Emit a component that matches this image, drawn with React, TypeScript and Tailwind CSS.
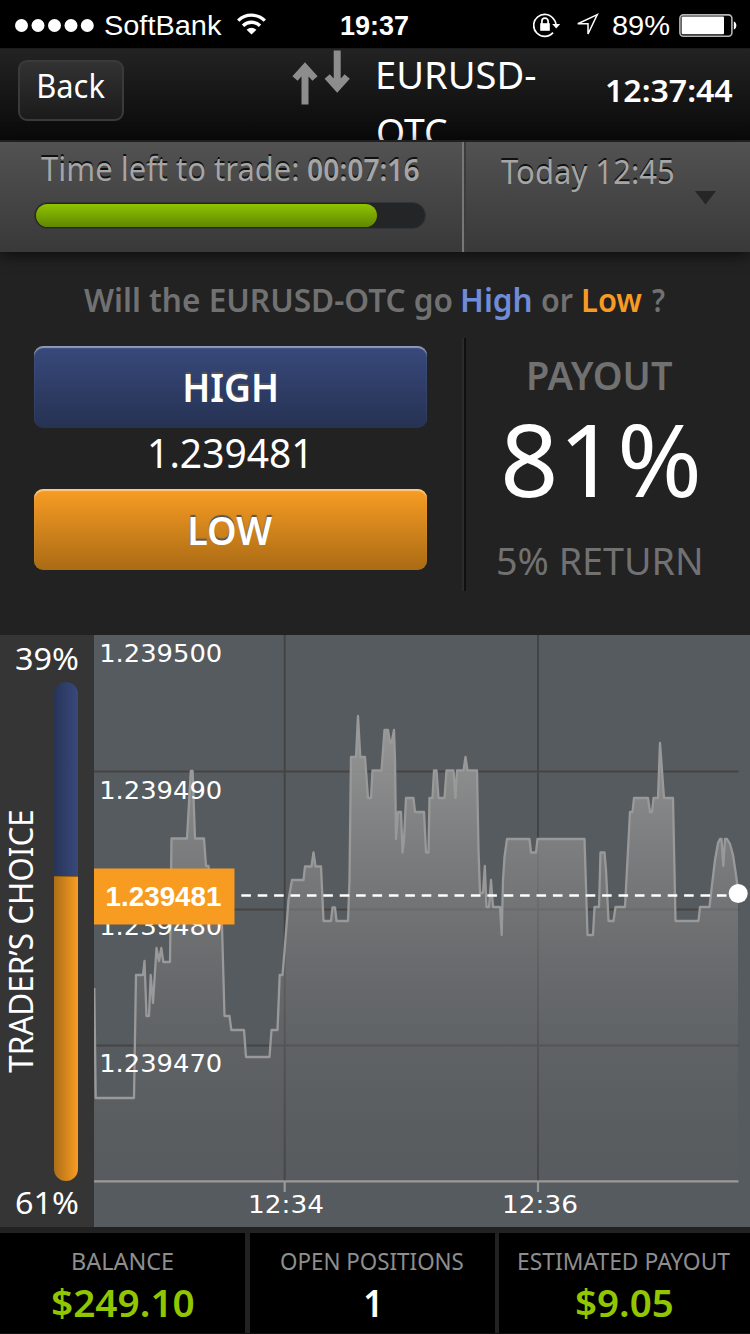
import { useLayoutEffect, useRef } from "react";
import clsx from "clsx";

/** Text stretched so that its inked width fills the width of its own box. */
function Fit({ children, className }: { children: string; className: string }) {
  const box = useRef<HTMLSpanElement>(null);
  const ink = useRef<HTMLSpanElement>(null);
  useLayoutEffect(() => {
    const b = box.current;
    const s = ink.current;
    const ctx = document.createElement("canvas").getContext("2d");
    if (!b || !s || !ctx) return;
    const cs = getComputedStyle(s);
    ctx.font = `${cs.fontWeight} ${cs.fontSize} ${cs.fontFamily}`;
    const m = ctx.measureText(children);
    const k = b.clientWidth / (m.actualBoundingBoxLeft + m.actualBoundingBoxRight);
    s.style.transform = `matrix(${k},0,0,1,${m.actualBoundingBoxLeft * k},0)`;
  }, [children]);
  return (
    <span ref={box} className={clsx("block shrink-0 whitespace-nowrap text-left", className)}>
      <span ref={ink} className="block w-max origin-left">
        {children}
      </span>
    </span>
  );
}

function StatusBar() {
  return (
    <div className="flex h-12 shrink-0 items-start bg-black font-['Liberation_Sans',sans-serif] text-[27px] leading-none text-white">
      <svg className="mt-[17px] ml-[15px] h-4 w-20" viewBox="0 0 80 16" fill="#fff">
        <circle cx="6.5" cy="8.5" r="6.5" />
        <circle cx="23" cy="8.5" r="6.5" />
        <circle cx="39.5" cy="8.5" r="6.5" />
        <circle cx="56" cy="8.5" r="6.5" />
        <circle cx="72.3" cy="8.5" r="6.5" />
      </svg>
      <Fit className="mt-[13px] ml-[10px] w-[117px]">SoftBank</Fit>
      <svg className="mt-[13px] ml-[15px] h-[22px] w-[29px]" viewBox="0 0 29 22" fill="none" stroke="#fff" strokeWidth="3.3">
        <path d="M1.2 7.6a19 19 0 0 1 26.6 0" />
        <path d="M6 12.7a12.2 12.2 0 0 1 17 0" />
        <path d="M14.5 21.6 9.6 16.8a7 7 0 0 1 9.8 0Z" fill="#fff" stroke="none" />
      </svg>
      <Fit className="mt-[13px] ml-[75px] w-[67px] font-bold">19:37</Fit>
      <svg className="mt-[12px] ml-[125px] h-[26px] w-[28px]" viewBox="0 0 28 26" fill="none" stroke="#fff" strokeWidth="1.7">
        <path d="M20.8 7.2A11 11 0 1 0 20 20.6M20.8 7.2A10.6 10.6 0 0 1 23 12" />
        <path d="M19.2 12h8l-4 4.6Z" fill="#fff" stroke="none" />
        <rect x="7.2" y="11.2" width="9.6" height="7.6" fill="#fff" stroke="none" />
        <path d="M8.9 12V9.2a3.1 3.1 0 0 1 6.2 0V12" />
      </svg>
      <svg className="mt-[12px] ml-[14px] h-[26px] w-[25px]" viewBox="0 0 25 26" fill="none" stroke="#fff" strokeWidth="1.5">
        <path d="M22.3 2.6 2.8 11.8H13V22Z" />
      </svg>
      <Fit className="mt-[13px] ml-[13px] w-[57px]">89%</Fit>
      <svg className="mt-[14px] ml-[9px] h-[23px] w-[60px]" viewBox="0 0 60 23">
        <rect x="0.9" y="0.9" width="52" height="21.3" rx="3.5" fill="none" stroke="#b5b5b5" strokeWidth="1.6" />
        <rect x="2.6" y="2.6" width="42.4" height="17.6" rx="1" fill="#fff" />
        <path d="M54.8 7.5c3.4.6 3.4 7.4 0 8Z" fill="#fff" />
      </svg>
    </div>
  );
}

function Header() {
  return (
    <header className="flex h-[92px] shrink-0 items-start overflow-hidden border-t border-[#1c1c1c] bg-gradient-to-b from-[#232323] to-[#0a0a0a] text-white">
      <button className="mt-[11px] ml-[18px] flex h-[61px] w-[106px] items-start rounded-[9px] border-2 border-[#3a3a3a] bg-gradient-to-b from-[#323232] to-[#1b1b1b]">
        <Fit className="mt-[7px] ml-[19px] w-[66px] text-[33.5px] leading-none">Back</Fit>
      </button>
      <svg className="mt-[1px] ml-[167px] h-14 w-[62px]" viewBox="0 0 62 56" fill="none" stroke="#8d8d8d" strokeWidth="7">
        <path d="M14 54.5V18M4 28.5 14 17.5 24 28.5" />
        <path d="M46.2 0.5V37M36.2 26.5 46.2 37.5 56.2 26.5" />
      </svg>
      <h1 className="-mt-[4.5px] ml-[25px] w-[179px] text-[39px] leading-[57px]">
        <Fit className="w-[157px]">EURUSD-</Fit>
        <Fit className="w-[69px]">OTC</Fit>
      </h1>
      <Fit className="mt-[26px] ml-[50px] w-[126px] text-[31px] leading-none font-semibold">12:37:44</Fit>
    </header>
  );
}

function TimeBar() {
  return (
    <section className="z-10 flex h-[112px] shrink-0 border-t-2 border-[#202020] bg-gradient-to-b from-[#525252] to-[#393939] text-[#a5a5a5] shadow-[0_3px_14px_rgba(0,0,0,0.65)] [text-shadow:0_-2px_0_#111]">
      <div className="w-[464px] border-r-2 border-[#777]">
        <div className="mt-[10.5px] ml-[41px] flex text-[32.5px] leading-none">
          <Fit className="w-[257px]">Time left to trade:</Fit>
          <Fit className="mt-px ml-[10px] w-[111px] text-[31px] font-semibold">00:07:16</Fit>
        </div>
        <div className="mt-[17px] ml-[34px] h-[27px] w-[392px] rounded-full border border-[#333537] bg-[#232527] p-px">
          <div className="h-[23px] w-[341px] rounded-full bg-gradient-to-b from-[#8fc400] to-[#618700]" />
        </div>
      </div>
      <div className="flex flex-1 items-start border-l-2 border-[#3c3c3c]">
        <Fit className="mt-[13px] ml-[35px] w-[172px] text-[33px] leading-none">Today 12:45</Fit>
        <svg className="mt-[49px] ml-[22px] h-[14px] w-[21px]" viewBox="0 0 21 14" fill="#262626">
          <path d="M0 0h21L10.5 13.5Z" />
        </svg>
      </div>
    </section>
  );
}

function TradePanel() {
  return (
    <section className="h-[383px] shrink-0 bg-[#222]">
      <div className="flex pt-[31.5px] pl-[84px] text-[32.5px] leading-none font-semibold text-[#717171]">
        <Fit className="w-[368px]">Will the EURUSD-OTC go</Fit>
        <Fit className="ml-[11px] w-[68px] text-[#708cd8]">High</Fit>
        <Fit className="ml-[11px] w-[31px]">or</Fit>
        <Fit className="ml-[10px] w-[59px] text-[#f89b22]">Low</Fit>
        <Fit className="ml-[10px] w-[13px]">?</Fit>
      </div>
      <div className="mt-[22px] ml-[34px] flex">
        <div className="mt-2 flex w-[393px] flex-col text-[40px] leading-none text-white">
          <button className="flex h-[82px] w-full rounded-[9px] bg-gradient-to-b from-[#38497c] to-[#263253] pt-[20.5px] pl-[151px] font-semibold shadow-[inset_0_2px_1px_rgba(255,255,255,0.45)] [text-shadow:0_-2px_1px_#555]">
            <Fit className="w-[91px]">HIGH</Fit>
          </button>
          <div className="flex h-[61px] pt-[5px] pl-[116px]">
            <Fit className="w-[156px]">1.239481</Fit>
          </div>
          <button className="flex h-[81px] w-full rounded-[9px] bg-gradient-to-b from-[#f99d24] to-[#aa6b14] pt-[20.5px] pl-[156px] font-semibold shadow-[inset_0_2px_1px_rgba(255,255,255,0.45)] [text-shadow:0_-2px_1px_#555]">
            <Fit className="w-[82px]">LOW</Fit>
          </button>
        </div>
        <div className="ml-[35px] h-[253px] w-1 border-r-2 border-l-2 border-r-[#101010] border-l-[#2b2b2b]" />
        <div className="flex flex-col text-[#717171]">
          <Fit className="mt-[18px] ml-[63px] w-[143px] text-[39.5px] leading-none font-semibold">PAYOUT</Fit>
          <Fit className="mt-[12px] ml-[38px] w-[193px] text-[101px] leading-none text-white">81%</Fit>
          <Fit className="mt-[31px] ml-[32px] w-[202px] text-[39px] leading-none">5% RETURN</Fit>
        </div>
      </div>
    </section>
  );
}

function TradersChoice() {
  return (
    <aside className="flex h-full w-[94px] shrink-0 flex-col bg-[#353535] text-[31px] leading-none text-white">
      <Fit className="mt-[8px] ml-4 w-[62px]">39%</Fit>
      <div className="mt-[8px] flex h-[499px]">
        <div className="flex h-full w-[54px] items-center justify-center pt-[20px]">
          <div className="-ml-3 shrink-0 -rotate-90">
            <Fit className="w-[262px] text-[33.5px]">TRADER’S CHOICE</Fit>
          </div>
        </div>
        <div className="flex h-full w-6 shrink-0 flex-col overflow-hidden rounded-full">
          <div className="h-[194px] bg-gradient-to-r from-[#283459] to-[#38497b]" />
          <div className="flex-1 border-t border-[#95610f] bg-gradient-to-r from-[#ad6f16] to-[#f99c22]" />
        </div>
      </div>
      <Fit className="mt-[6px] ml-4 w-[62px]">61%</Fit>
    </aside>
  );
}

const SERIES =
  "94.3,988 95.7,1098 134,1098 136,975 143,975 144.5,961 146.5,1016 149,1016 150.7,975 153,1003 156.5,948 159,961 161.3,948 163.3,962 170,962 171.5,838.5 187,838.5 190.8,771 192.6,771 195,838.5 204,838.5 206,866 208.5,866 209.5,880 221,890 224.5,1016 229.5,1016 231.3,1030 244,1030 246,1057 269.5,1057 271.5,1030 277.5,1030 279.7,975 282.5,975 285,945 288.5,900 292,880 303.5,880 305,866.5 311.5,866.5 313.5,852.5 315.5,866.5 321,866.5 323.5,921 331,921 332.5,907.5 335,907.5 336.5,921 348,921 349.5,880 351,757 356,757 358,716 360.3,757 365,757 368,798 371,798 372.5,770.5 381.5,770.5 384.5,730 388,730 390,743 391.5,743 394,730 395,760 396,839 398,812 401,812 402.5,852.5 404,840 406,798 413.5,798 415,812 424,812 426,852.5 428.5,852.5 429.5,798 432.5,798 434,770.5 436.5,770.5 438.5,798 444.5,798 446.5,770.5 453.5,770.5 455.5,798 457,770.5 463.5,770.5 465.5,757 467.5,770.5 477,770.5 478.5,850 480,893 483,893 484.8,866 486.5,907 489,907 491,880 493,907 500,907 501.7,935 503,880 504.5,857 507,839 529.5,839 531,852.5 536,852.5 537.5,839 584.5,839 587.5,935 593,935 594.5,907 599,907 600.5,852.5 604.5,852.5 606,870 608.5,921 613.5,921 615.5,907 625,907 630,812 632.5,812 634,798 648,798 650,812 652,812 653.5,798 658,798 660,743 664,798 673,798 675.5,921 698.5,921 700,907 709.5,907 712,885 715,860 718,843 720,839 721.5,839 723.3,866 725,839 727,839 730,844 733,855 736,875 738,890";

function Chart() {
  return (
    <svg
      className="h-[592px] w-[656px] shrink-0 bg-[#565b5f] font-['DejaVu_Sans',sans-serif] text-[25.6px]"
      viewBox="94 635 656 592"
      fill="none"
    >
      <defs>
        <linearGradient id="area" gradientUnits="userSpaceOnUse" x1="0" y1="716" x2="0" y2="1181">
          <stop offset="0" stopColor="#999" />
          <stop offset="1" stopColor="#606060" stopOpacity="0.1" />
        </linearGradient>
      </defs>
      <path
        d="M94 771.5H738.5M94 909.5H738.5M94 1045.5H738.5M284.7 635V1181M538 635V1181"
        stroke="#444"
        strokeWidth="2"
      />
      <polygon points={`${SERIES} 738,1181 94.3,1181`} fill="url(#area)" />
      <polyline points={SERIES} stroke="#999" strokeWidth="2.3" strokeLinejoin="round" />
      <path d="M94 1181.3H738.5M284.7 1181V1192M538 1181V1192" stroke="#999" strokeWidth="2.2" />
      <g fill="#fff">
        <text x="99.2" y="662.3" textLength="123" lengthAdjust="spacingAndGlyphs">1.239500</text>
        <text x="99.2" y="798.8" textLength="123" lengthAdjust="spacingAndGlyphs">1.239490</text>
        <text x="99.2" y="935.3" textLength="123" lengthAdjust="spacingAndGlyphs">1.239480</text>
        <text x="99.2" y="1071.8" textLength="123" lengthAdjust="spacingAndGlyphs">1.239470</text>
        <text x="248" y="1212.8" textLength="76" lengthAdjust="spacingAndGlyphs">12:34</text>
        <text x="502" y="1212.8" textLength="76" lengthAdjust="spacingAndGlyphs">12:36</text>
      </g>
      <path d="M241.3 895.5H728" stroke="#fff" strokeWidth="2.4" strokeDasharray="9.6 6.8" />
      <circle cx="738.2" cy="893.5" r="9.5" fill="#fff" />
      <rect x="94" y="868.5" width="140.5" height="56" fill="#f79b21" />
      <text
        x="105.5"
        y="906"
        textLength="116"
        lengthAdjust="spacingAndGlyphs"
        fill="#fff"
        className="font-['Liberation_Sans',sans-serif] text-[27.5px] font-bold"
      >
        1.239481
      </text>
    </svg>
  );
}

function Footer() {
  return (
    <footer className="flex h-[107px] shrink-0 gap-[4.5px] border-t-[6px] border-b border-t-[#222] border-b-[#111] bg-[#222] text-[23.5px] leading-none text-[#8e8e8e]">
      <div className="flex w-[245px] flex-col bg-black">
        <Fit className="mt-[17px] ml-[73px] w-[100px]">BALANCE</Fit>
        <Fit className="mt-[9px] ml-[52px] w-[142px] text-[38px] font-semibold text-[#91c600]">$249.10</Fit>
      </div>
      <div className="flex w-[245px] flex-col bg-black">
        <Fit className="mt-[17px] ml-[31.5px] w-[182px]">OPEN POSITIONS</Fit>
        <Fit className="mt-[9px] ml-[115px] w-[12px] text-[38px] font-semibold text-white">1</Fit>
      </div>
      <div className="flex flex-1 flex-col bg-black">
        <Fit className="mt-[17px] ml-[20px] w-[211px]">ESTIMATED PAYOUT</Fit>
        <Fit className="mt-[9px] ml-[77px] w-[96px] text-[38px] font-semibold text-[#91c600]">$9.05</Fit>
      </div>
    </footer>
  );
}

export default function App() {
  return (
    <main className="flex h-[1334px] w-[750px] flex-col overflow-hidden bg-[#222] font-['Noto_Sans','Open_Sans',sans-serif]">
      <StatusBar />
      <Header />
      <TimeBar />
      <TradePanel />
      <section className="flex h-[592px] shrink-0">
        <TradersChoice />
        <Chart />
      </section>
      <Footer />
    </main>
  );
}
